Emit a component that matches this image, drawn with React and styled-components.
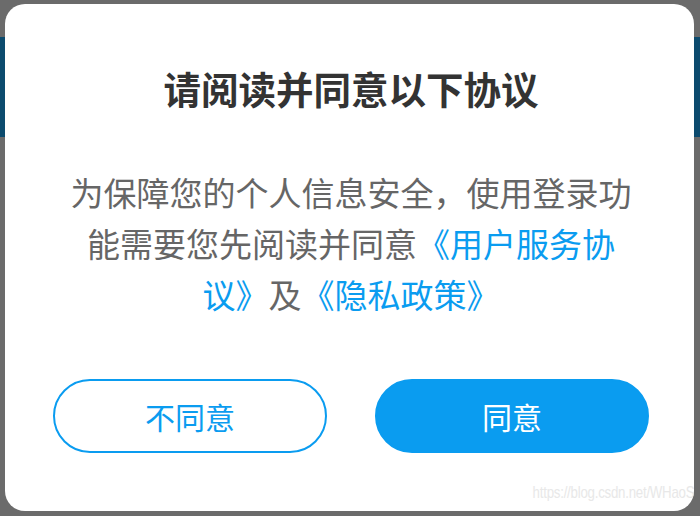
import React from 'react';
import styled, { createGlobalStyle } from 'styled-components';

const GlobalStyle = createGlobalStyle`
    html, body {
        margin: 0;
        padding: 0;
    }
    body {
        font-family: "Noto Sans CJK SC", "Noto Sans", sans-serif;
        background:
            linear-gradient(to bottom,
                #6b6b6b 0, #6b6b6b 37px,
                #0c4b6e 37px, #0c4b6e 137px,
                #6b6b6b 137px);
    }
`

const Screen = styled.div`
    position: relative;
    width: 700px;
    height: 516px;
    overflow: hidden;
    padding: 4px 6px 5px 5px;
    box-sizing: border-box;
`
const Card = styled.div`
    position: relative;
    height: 100%;
    background: #fff;
    border-radius: 20px;
    display: flex;
    flex-direction: column;
    align-items: center;
    padding: 62px 45px 0 48px;
    box-sizing: border-box;
    overflow: hidden;
`
const Title = styled.h1`
    margin: 0;
    font-size: 37.5px;
    line-height: 44px;
    font-weight: 700;
    color: #333;
`
const Body = styled.p`
    margin: 57px 0 0 0;
    padding: 0 10px;
    font-size: 33px;
    line-height: 51px;
    color: #666;
    text-align: center;
`
const Link = styled.span`
    color: #0a9cf0;
`
const Actions = styled.div`
    display: flex;
    gap: 48px;
    width: 100%;
    margin-top: 59px;
`
const Button = styled.button`
    flex: 1;
    height: 74px;
    border-radius: 37px;
    font-family: inherit;
    font-size: 30px;
    box-sizing: border-box;
    cursor: pointer;
    border: 2px solid #0a9cf0;
    color: ${p => p.primary ? '#fff' : '#0a9cf0'};
    background: ${p => p.primary ? '#0a9cf0' : '#fff'};
`
const Watermark = styled.span`
    position: absolute;
    right: 0;
    bottom: 8px;
    font-family: "Liberation Sans", sans-serif;
    font-size: 17px;
    letter-spacing: -0.3px;
    color: #e8e8e8;
    white-space: nowrap;
    transform: scaleX(0.78);
    transform-origin: right center;
`

export default function App() {
    return (
        <Screen>
            <GlobalStyle />
            <Card>
                <Title>请阅读并同意以下协议</Title>
                <Body>
                    为保障您的个人信息安全，使用登录功能需要您先阅读并同意
                    <Link>《用户服务协议》</Link>及<Link>《隐私政策》</Link>
                </Body>
                <Actions>
                    <Button>不同意</Button>
                    <Button primary>同意</Button>
                </Actions>
                <Watermark>https://blog.csdn.net/WHaoS</Watermark>
            </Card>
        </Screen>
    )
}
